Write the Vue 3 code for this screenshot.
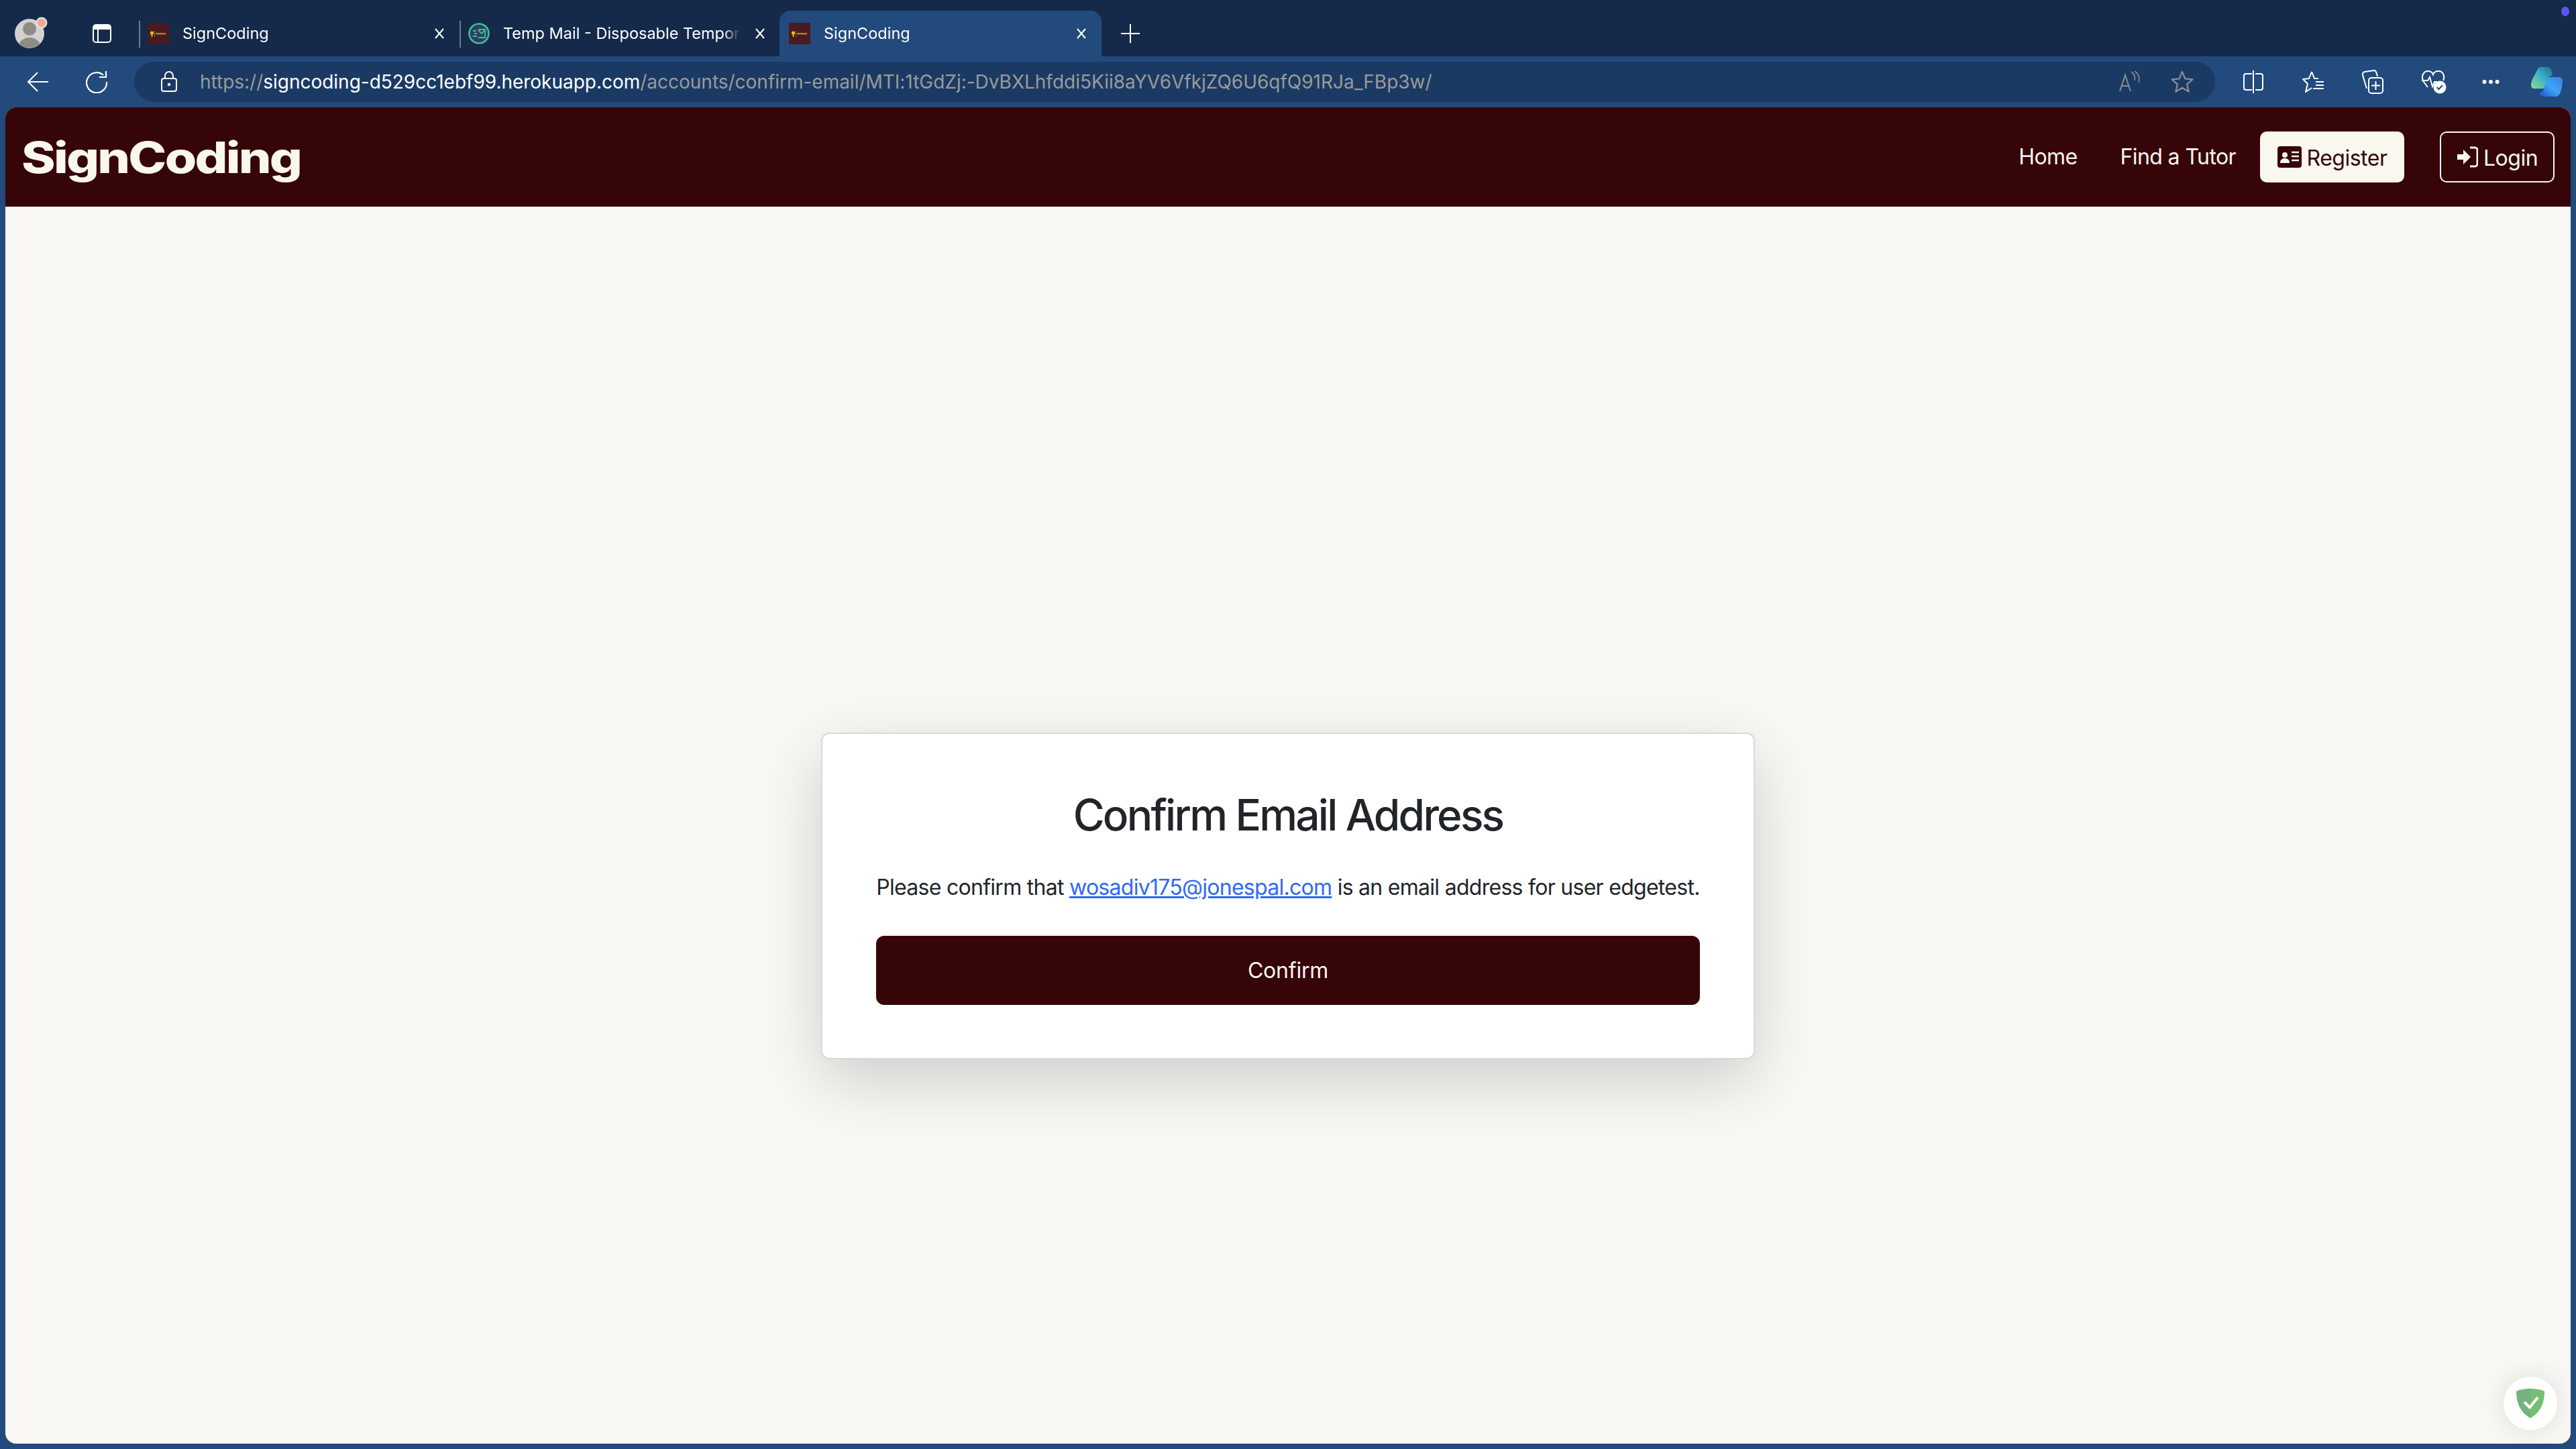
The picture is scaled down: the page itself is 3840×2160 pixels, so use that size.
<script setup>
const tabs = [
  { id: 1, title: 'SignCoding', icon: 'site', cls: 'tab-plain' },
  { id: 2, title: 'Temp Mail - Disposable Temporary Email', icon: 'mail', cls: 'tab-plain' },
  { id: 3, title: 'SignCoding', icon: 'site', cls: 'tab-active' }
]
</script>

<template>
  <div class="window">
    <header class="tabstrip">
      <div class="profile">
        <svg width="56" height="56" viewBox="0 0 56 56">
          <defs><clipPath id="av"><circle cx="22" cy="28" r="22" /></clipPath></defs>
          <circle cx="22" cy="28" r="22" fill="#d3d1cd" />
          <g clip-path="url(#av)" fill="#8f8b87">
            <circle cx="22" cy="21" r="10" />
            <ellipse cx="22" cy="47" rx="16" ry="13" />
          </g>
          <circle cx="40" cy="12" r="7.5" fill="#f0a89c" stroke="#e6e4e0" stroke-width="2" />
        </svg>
      </div>
      <svg class="panel-icon" width="28" height="28" viewBox="0 0 28 28" fill="none">
        <rect x="1" y="1" width="26" height="26" rx="4" stroke="#fff" stroke-width="2" />
        <path d="M1 5a4 4 0 0 1 4-4h18a4 4 0 0 1 4 4v3H1z" fill="#fff" />
        <path d="M8 8v19" stroke="#fff" stroke-width="2" />
      </svg>
      <div class="tabs">
        <div v-for="t in tabs" :key="t.id" class="tab" :class="t.cls">
          <svg v-if="t.icon === 'site'" class="favicon" width="32" height="32" viewBox="0 0 32 32">
            <rect width="32" height="32" fill="#4a1b1e" />
            <circle cx="6.5" cy="15" r="2.6" fill="#e6c21f" />
            <rect x="5.6" y="16" width="1.8" height="5" fill="#e6c21f" />
            <rect x="10" y="12" width="0.6" height="9" fill="#c9a92a" />
            <rect x="12" y="15" width="15" height="2.4" fill="#c9a92a" opacity=".75" />
          </svg>
          <svg v-else class="favicon" width="32" height="32" viewBox="0 0 32 32" fill="none">
            <circle cx="16" cy="16" r="14.5" fill="#2e3f5f" stroke="#3fbd9b" stroke-width="2.6" />
            <path d="M15 10h10v12H15" stroke="#3fbd9b" stroke-width="1.8" />
            <path d="M15 11l5 5 5-5M7 12h5M9 16h4M7 20h6" stroke="#3fbd9b" stroke-width="1.8" />
          </svg>
          <span class="tab-title">{{ t.title }}</span>
          <svg class="tab-close" width="16" height="18" viewBox="0 0 16 18" fill="none">
            <path d="M2 2l12 14M14 2L2 16" stroke="#fff" stroke-width="2" />
          </svg>
        </div>
      </div>
      <svg class="new-tab" width="28" height="28" viewBox="0 0 28 28" fill="none">
        <path d="M14 0v28M0 14h28" stroke="#fff" stroke-width="2" />
      </svg>
      <span class="status-dot"></span>
    </header>

    <nav class="toolbar">
      <svg class="ico-back" width="32" height="30" viewBox="0 0 32 30" fill="none">
        <path d="M16 1L2 15l14 14M2 15h30" stroke="#fff" stroke-width="2" />
      </svg>
      <svg class="ico-reload" width="34" height="34" viewBox="0 0 34 34" fill="none">
        <path d="M27 7a15 15 0 1 0 5 10" stroke="#fff" stroke-width="2.2" />
        <path d="M21 10h10V1" stroke="#fff" stroke-width="2.2" />
      </svg>
      <div class="addressbar">
        <svg class="ico-lock" width="24" height="32" viewBox="0 0 24 32" fill="none">
          <rect x="1" y="11" width="22" height="19" rx="3" stroke="#fff" stroke-width="2" />
          <path d="M6 11V7a6 6 0 0 1 12 0v4" stroke="#fff" stroke-width="2" />
          <circle cx="12" cy="20" r="2.2" fill="#fff" />
        </svg>
        <div class="url"><span class="dim">https://</span><span class="host">signcoding-d529cc1ebf99.herokuapp.com</span><span class="dim">/accounts/confirm-email/MTI:1tGdZj:-DvBXLhfddi5Kii8aYV6VfkjZQ6U6qfQ91RJa_FBp3w/</span></div>
        <svg class="ico-read" width="32" height="32" viewBox="0 0 32 32" fill="none">
          <path d="M1 30L9 6l8 24M4 22h10" stroke="#8b8f96" stroke-width="2" />
          <path d="M18 1c5 3 6 8 5 13M23 0c6 4 8 10 6 17" stroke="#8b8f96" stroke-width="1.6" />
        </svg>
        <svg class="ico-star" width="34" height="34" viewBox="0 0 34 34" fill="none">
          <path d="M17 2l4.4 10.4 11 .9-8.3 7.3 2.5 11L17 25.800l-9.600 5.800 2.500-11-8.300-7.300 11-.9z" stroke="#8b8f96" stroke-width="2.200" stroke-linejoin="round" />
        </svg>
      </div>
      <div class="tools">
        <svg class="tool t-split" width="30" height="34" viewBox="0 0 30 34" fill="none">
          <path d="M13 5H4a3 3 0 0 0-3 3v18a3 3 0 0 0 3 3h9M18 5h8a3 3 0 0 1 3 3v18a3 3 0 0 1-3 3h-8M15 0v34" stroke="#fff" stroke-width="2" />
        </svg>
        <svg class="tool t-fav" width="34" height="34" viewBox="0 0 34 34" fill="none">
          <path d="M15 2l4 10h6M15 2l-4 10-9 1 7 7-3 12 9-6M21 17h12M21 22h12M17 27h16" stroke="#fff" stroke-width="2" stroke-linejoin="round" />
        </svg>
        <svg class="tool t-coll" width="34" height="36" viewBox="0 0 34 36" fill="none">
          <path d="M8 28L2 8a4 4 0 0 1 3-5l14-2c2 0 3 1 4 5l1 4" stroke="#fff" stroke-width="2" />
          <rect x="11" y="12" width="21" height="23" rx="4" fill="#234a7c" stroke="#fff" stroke-width="2" />
          <path d="M21.500 17v13M15 23.500h13" stroke="#fff" stroke-width="2" />
        </svg>
        <svg class="tool t-health" width="38" height="36" viewBox="0 0 38 36" fill="none">
          <path d="M10 26L4 18C-1 10 4 2 10 2c4 0 7 2 8 5 1-3 4-5 8-5 7 0 10 8 7 14" stroke="#fff" stroke-width="2" />
          <path d="M1 16h9l3-5 4 14 3-7h4" stroke="#fff" stroke-width="2" />
          <circle cx="28" cy="26" r="9.500" fill="#fff" />
          <path d="M23.500 26l3 3 5.500-6" stroke="#234a7c" stroke-width="2" />
        </svg>
        <svg class="tool t-more" width="26" height="8" viewBox="0 0 26 8">
          <circle cx="3.500" cy="4" r="3" fill="#fff" />
          <circle cx="13" cy="4" r="3" fill="#fff" />
          <circle cx="22.500" cy="4" r="3" fill="#fff" />
        </svg>
        <svg class="tool t-copilot" width="48" height="44" viewBox="0 0 48 44">
          <defs>
            <linearGradient id="cpa" x1="0" y1="1" x2="1" y2="0">
              <stop offset="0" stop-color="#8fdc8e" />
              <stop offset=".5" stop-color="#3fb3c6" />
              <stop offset="1" stop-color="#1c6f9a" />
            </linearGradient>
            <linearGradient id="cpb" x1="0" y1="1" x2="1" y2="0">
              <stop offset="0" stop-color="#1f4fd0" />
              <stop offset=".5" stop-color="#3fa6f5" />
              <stop offset="1" stop-color="#3a7fe0" />
            </linearGradient>
          </defs>
          <path d="M10 3c1-2 3-3 5-3h8c4 0 7 2 8 6l1 6c-4 1-6 3-7 7l-2 8c-1 3-3 5-7 5H5c-3 0-5-2-5-5 0-3 1-6 2-9z" fill="url(#cpa)" />
          <path d="M20 44c-4 0-7-2-8-6 4 0 6-1 7-5l4-13c1-3 3-5 7-5h11c4 0 6 2 6 5 0 5-1 12-3 17-1 4-4 7-8 7z" fill="url(#cpb)" />
        </svg>
      </div>
    </nav>

    <main class="page">
      <div class="navbar">
        <div class="brand">SignCoding</div>
        <div class="nav-links">
          <a class="nav-link link-home">Home</a>
          <a class="nav-link link-tutor">Find a Tutor</a>
          <a class="btn btn-register">
            <svg width="36" height="32" viewBox="0 0 36 32">
              <rect width="36" height="32" rx="4" fill="#360508" />
              <circle cx="11" cy="13" r="4" fill="#faf7ef" />
              <path d="M4 25c0-5 3-7 7-7s7 2 7 7z" fill="#faf7ef" />
              <path d="M21 9h11M21 15h11M21 21h11" stroke="#faf7ef" stroke-width="2.400" />
            </svg>
            <span class="btn-text">Register</span>
          </a>
          <a class="btn btn-login">
            <svg width="32" height="32" viewBox="0 0 32 32">
              <path d="M1 12h9V5l11 11-11 11v-7H1z" fill="#faf7ef" />
              <path d="M20 2h7a4 4 0 0 1 4 4v20a4 4 0 0 1-4 4h-7" fill="none" stroke="#faf7ef" stroke-width="3" />
            </svg>
            <span class="btn-text">Login</span>
          </a>
        </div>
      </div>
      <section class="content">
        <div class="card">
          <h2 class="card-title">Confirm Email Address</h2>
          <p class="card-text">Please confirm that <a class="mail">wosadiv175@jonespal.com</a> is an email address for user edgetest.</p>
          <button class="confirm" type="button">Confirm</button>
        </div>
      </section>
      <div class="guard">
        <svg width="42" height="44" viewBox="0 0 42 44">
          <path d="M21 0C13 0 6 1 0 4c0 16 5 31 21 40z" fill="#74b27f" />
          <path d="M21 0c8 0 15 1 21 4 0 16-5 31-21 40z" fill="#78bd72" />
          <path d="M12 20l8 8 12-15" fill="none" stroke="#fff" stroke-width="4" />
        </svg>
      </div>
    </main>
  </div>
</template>

<style>
html, body { margin: 0; padding: 0; background: #234a7c; }
</style>

<style scoped>
.window {
  position: relative;
  width: 3840px;
  height: 2160px;
  overflow: hidden;
  display: flex;
  flex-direction: column;
  background: #234a7c;
  font-family: Inter, "Liberation Sans", sans-serif;
}
.tabstrip {
  height: 84px;
  flex: none;
  display: flex;
  align-items: flex-end;
  background: #152a4a;
  box-sizing: border-box;
}
.profile { width: 56px; height: 56px; margin: 0 0 6px 22px; }
.panel-icon { margin: 0 41px 20px 60px; }
.tabs { display: flex; align-items: flex-end; }
.tab {
  position: relative;
  box-sizing: border-box;
  width: 478px;
  height: 68px;
  display: flex;
  align-items: center;
  padding: 0 22px 1px 13px;
  color: #fff;
  font-size: 23.5px;
  font-weight: 400;
}
.tab-plain::before {
  content: "";
  position: absolute;
  left: 0;
  top: 15px;
  width: 2px;
  height: 40px;
  background: #6b7a92;
}
.tab-active {
  width: 480px;
  background: #234a7c;
  border-radius: 16px 16px 0 0;
  margin-left: -1px;
  padding-left: 14px;
}
.favicon { flex: none; margin-right: 20px; }
.tab-title {
  flex: 1;
  min-width: 0;
  white-space: nowrap;
  overflow: hidden;
  -webkit-mask-image: linear-gradient(to right, #000 93%, transparent);
  mask-image: linear-gradient(to right, #000 93%, transparent);
  margin-right: 22px;
}
.tab-close { flex: none; }
.new-tab { margin: 0 0 20px 29px; }
.status-dot {
  position: absolute;
  left: 3818px;
  top: 10px;
  width: 12px;
  height: 14px;
  border-radius: 50%;
  background: #5f55ee;
}
.toolbar {
  height: 76px;
  flex: none;
  display: flex;
  align-items: center;
  box-sizing: border-box;
  padding-top: 0;
}
.ico-back { margin-left: 40px; }
.ico-reload { margin-left: 55px; }
.addressbar {
  width: 3102px;
  height: 60px;
  margin-left: 39px;
  border-radius: 30px;
  background: #1b3a63;
  display: flex;
  align-items: center;
  box-sizing: border-box;
}
.ico-lock { margin-left: 40px; flex: none; }
.url {
  margin-left: 34px;
  flex: 1;
  font-size: 28px;
  letter-spacing: -0.015px;
  white-space: nowrap;
  color: #9a9a9a;
}
.host { color: #fff; }
.ico-read { margin-right: 45px; flex: none; }
.ico-star { margin-right: 32px; flex: none; }
.tools { display: flex; align-items: center; margin-left: 42px; }
.t-fav { margin-left: 57px; }
.t-coll { margin-left: 55px; }
.t-health { margin-left: 55px; }
.t-more { margin-left: 53px; }
.t-copilot { margin-left: 47px; }
.page {
  position: relative;
  flex: 1;
  margin: 0 8px 8px;
  border-radius: 16px;
  overflow: hidden;
  background: #faf8f5;
  display: flex;
  flex-direction: column;
}
.navbar {
  height: 148px;
  flex: none;
  background: #360508;
  display: flex;
  align-items: center;
  justify-content: space-between;
  color: #faf7ef;
}
.brand {
  margin: 2px 0 0 24px;
  font-size: 64px;
  font-weight: 800;
  letter-spacing: -2.3px;
  transform: scaleX(1.2);
  transform-origin: left center;
  line-height: 1;
}
.nav-links { display: flex; align-items: center; padding-right: 24px; }
.nav-link { font-size: 32px; font-weight: 400; letter-spacing: -0.6px; white-space: nowrap; padding-bottom: 2px; }
.link-tutor { margin-left: 64px; }
.btn {
  height: 76px;
  box-sizing: border-box;
  border-radius: 10px;
  display: flex;
  align-items: center;
  justify-content: center;
  gap: 8px;
  font-size: 32px;
  letter-spacing: -0.5px;
}
.btn-text { padding-top: 2px; }
.btn-register {
  width: 215px;
  margin-left: 36px;
  background: #faf7ef;
  color: #360508;
}
.btn-login {
  width: 171px;
  margin-left: 53px;
  border: 2px solid #faf7ef;
  color: #faf7ef;
}
.content { flex: 1; padding-top: 784px; }
.card {
  width: 1392px;
  height: 487px;
  margin: 0 auto;
  box-sizing: border-box;
  padding: 0 80px;
  background: #fff;
  border: 2px solid rgba(0, 0, 0, .15);
  border-radius: 12px;
  box-shadow: 0 32px 96px rgba(0, 0, 0, .175);
  display: flex;
  flex-direction: column;
  color: #212529;
}
.card-title {
  margin: 82px 0 0;
  text-align: center;
  font-size: 64px;
  font-weight: 500;
  letter-spacing: -2.8px;
  line-height: 77px;
}
.card-text {
  margin: 46px 0 0;
  font-size: 32px;
  letter-spacing: -0.72px;
  line-height: 48px;
  white-space: nowrap;
  text-align: center;
}
.mail { color: #2f68fb; text-decoration: underline; }
.confirm {
  margin-top: 48px;
  width: 100%;
  height: 103px;
  border: 0;
  border-radius: 12px;
  background: #360508;
  color: #faf7ef;
  font-family: inherit;
  font-size: 32px;
  letter-spacing: -0.2px;
}
.guard {
  position: absolute;
  left: 3724px;
  top: 1892px;
  width: 80px;
  height: 80px;
  border-radius: 50%;
  background: #fff;
  box-shadow: 0 0 40px rgba(0, 0, 0, .12);
  display: flex;
  align-items: center;
  justify-content: center;
}
</style>
